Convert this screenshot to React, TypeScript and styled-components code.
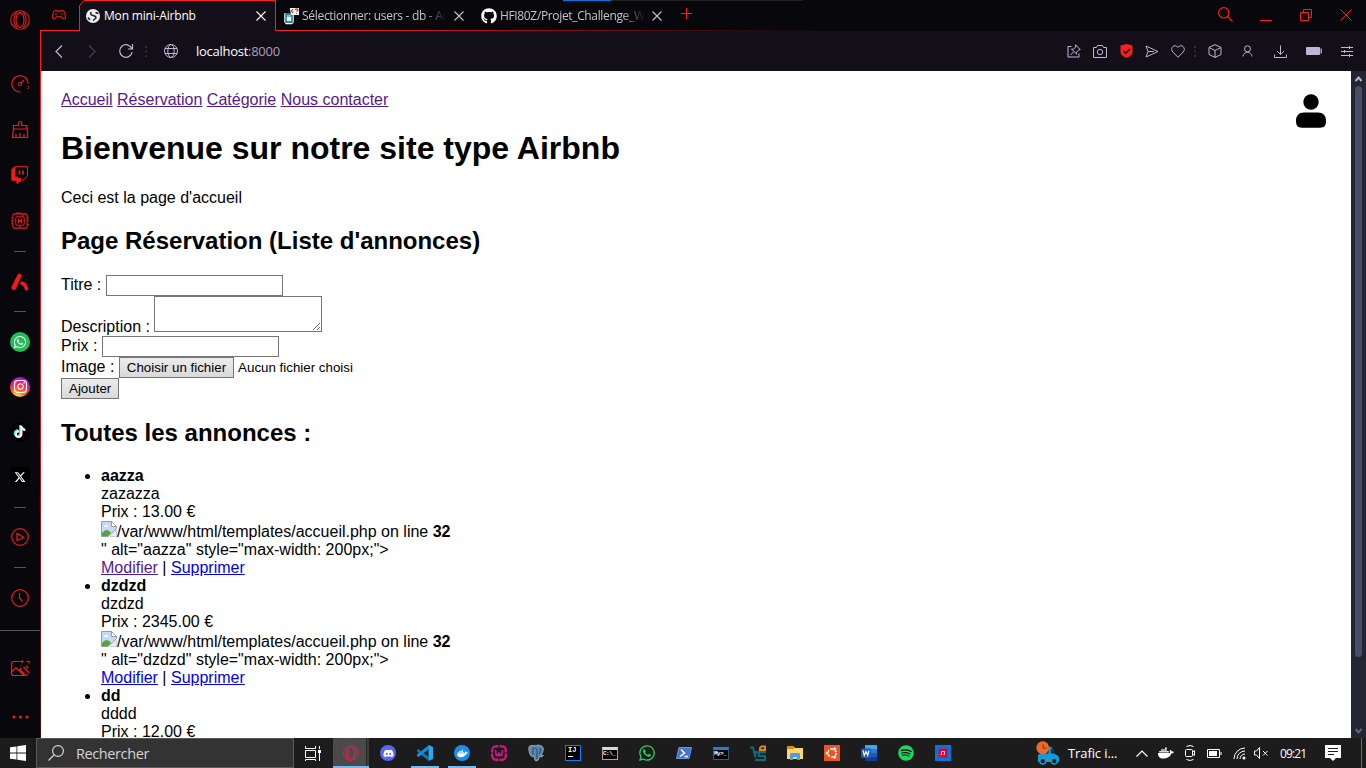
import React from 'react';
import styled, { createGlobalStyle } from 'styled-components';
import { FaWhatsapp, FaDiscord, FaDocker, FaGithub, FaInstagram, FaTiktok, FaXTwitter, FaSpotify } from 'react-icons/fa6';

const RED = '#fa1e1e';
const LILAC = '#c0b5d5';

const GlobalStyle = createGlobalStyle`
  * { box-sizing: border-box; }
  body { margin: 0; overflow: hidden; background: #fff; }
`;

const Desktop = styled.div`
  width: 1366px;
  height: 768px;
  display: flex;
  flex-direction: column;
  overflow: hidden;
  font-family: 'Open Sans', 'Noto Sans', sans-serif;
`;

const BrowserWindow = styled.div`
  height: 738px;
  display: flex;
  background: #08080c;
`;

const Glyph = styled.svg`
  display: block;
  flex: none;
  overflow: visible;
  fill: none;
  stroke: currentColor;
`;

type IconProps = { w?: number; h?: number; box?: string; sw?: number; children: React.ReactNode };
const Icon = ({ w = 18, h = w, box, sw = 1, children }: IconProps) => (
  <Glyph width={w} height={h} viewBox={box ?? `0 0 ${w} ${h}`} strokeWidth={sw}>{children}</Glyph>
);

/* ---------- sidebar ---------- */
const Sidebar = styled.aside`
  width: 40px;
  flex: none;
  display: flex;
  flex-direction: column;
  color: #eb1c1e;
`;

const SideSlot = styled.div<{ $h: number; $gap?: number }>`
  height: ${p => p.$h}px;
  margin-top: ${p => p.$gap ?? 0}px;
  flex: none;
  display: flex;
  align-items: center;
  justify-content: center;
`;

const Dash = styled.i`
  width: 12px;
  height: 1px;
  background: #d91b1e;
`;

const SideRule = styled.i`
  width: 40px;
  height: 1px;
  background: #55555c;
`;

const AppBadge = styled.span<{ $bg: string; $radius?: number; $size?: number }>`
  width: 20px;
  height: 20px;
  border-radius: ${p => p.$radius ?? 10}px;
  background: ${p => p.$bg};
  color: #fff;
  font-size: ${p => p.$size ?? 13}px;
  display: flex;
  align-items: center;
  justify-content: center;
`;

const TikTokMark = styled(FaTiktok)`
  filter: drop-shadow(-0.8px -0.4px 0 #25f4ee) drop-shadow(0.8px 0.4px 0 #fe2c55);
`;

const OperaLogo = ({ size = 20 }: { size?: number }) => (
  <Icon w={size} box="0 0 20 20" sw={1.1}>
    <circle cx="10" cy="10" r="9.3" />
    <ellipse cx="10" cy="10" rx="4" ry="7.4" />
    <path d="M7 2.5C3 5.5 3 14.5 7 17.5M13 2.5c4 3 4 12 0 15" />
  </Icon>
);

/* ---------- browser chrome ---------- */
const BrowserColumn = styled.div`
  width: 1326px;
  display: flex;
  flex-direction: column;
`;

const TabStrip = styled.header`
  height: 31px;
  display: flex;
  position: relative;
  color: #c8c8cc;
  &::after {
    content: '';
    position: absolute;
    left: 235px;
    bottom: 0;
    width: 540px;
    height: 1px;
    background: linear-gradient(90deg, ${RED}, #c91519 30%, rgba(250, 30, 30, 0));
  }
`;

const LoadStrip = styled.i`
  position: absolute;
  left: 523px;
  top: 0;
  width: 803px;
  height: 1px;
  background: linear-gradient(90deg, #0078d7 48px, #202023 48px, #202023 240px, transparent 240px);
`;

const GameCorner = styled.div`
  width: 39px;
  height: 31px;
  border-bottom: 1px solid ${RED};
  padding: 10px 0 0 12px;
  color: #d61c1f;
`;

const Tab = styled.div<{ $active?: boolean; $w: number; $pad: number }>`
  position: relative;
  width: ${p => p.$w}px;
  height: 31px;
  padding: 1px 10px 0 ${p => p.$pad}px;
  display: flex;
  align-items: center;
  color: ${p => (p.$active ? '#fff' : '#c4c4c8')};
  z-index: ${p => (p.$active ? 1 : 0)};
`;

const TabFrame = styled.svg`
  position: absolute;
  inset: 0;
`;

const TabTitle = styled.span<{ $fade?: boolean; $gap: number; $w: number; $spacing: number }>`
  position: relative;
  width: ${p => p.$w}px;
  margin: 0 auto 0 ${p => p.$gap}px;
  font-size: 12px;
  line-height: 16px;
  letter-spacing: ${p => p.$spacing}px;
  white-space: nowrap;
  overflow: hidden;
  ${p => p.$fade && 'mask-image: linear-gradient(90deg, #000 84%, transparent 100%);'}
`;

const Favicon = styled.span`
  position: relative;
  display: flex;
  font-size: 16px;
  color: #fff;
`;

const NewTab = styled.div`
  flex: none;
  padding: 8px 0 0 9px;
  color: #ff1a1a;
`;

const WindowButtons = styled.div`
  margin-left: auto;
  padding: 7px 14px 0 0;
  display: flex;
  gap: 27px;
  color: ${RED};
`;

const CloseMark = () => (
  <Icon w={10} sw={1.1}><path d="M.5.5l9 9M9.5.5l-9 9" /></Icon>
);

const Toolbar = styled.div`
  height: 40px;
  padding: 0 4px 0 14px;
  display: flex;
  align-items: center;
  background: #120f19;
  border-left: 1px solid ${RED};
  color: ${LILAC};
`;

const ToolSlot = styled.span<{ $w: number; $dim?: boolean }>`
  width: ${p => p.$w}px;
  display: flex;
  justify-content: center;
  opacity: ${p => (p.$dim ? 0.3 : 1)};
`;

const Address = styled.span`
  margin: 0 auto 0 15px;
  font-size: 13px;
  letter-spacing: -0.27px;
  color: #a89fbb;
  b { font-weight: 400; color: #fff; }
`;

const DotColumn = () => (
  <Icon w={2} h={11} sw={2}><path d="M1 0v2M1 4.5v2M1 9v2" opacity=".18" /></Icon>
);

/* ---------- web page ---------- */
const Viewport = styled.div`
  flex: 1;
  min-height: 0;
  display: flex;
  background: #fff;
  border-left: 1px solid;
  border-image: linear-gradient(${RED}, #c3171c 55%, #470c10) 1;
`;

const Page = styled.main`
  flex: 1;
  height: 667px;
  padding: 20px;
  overflow: hidden;
  position: relative;
  color: #000;
  font-family: 'Liberation Sans', Arial, sans-serif;
  font-size: 16px;
  line-height: normal;
  ul { margin: 0; padding-left: 40px; }
`;

const Link = styled.a<{ $visited?: boolean }>`
  color: ${p => (p.$visited ? '#551a8b' : '#0000ee')};
  text-decoration: underline;
`;

const Account = styled.div`
  float: right;
  margin: 3px 5px 0 0;
`;

const Field = styled.input`
  width: 177px;
  height: 21px;
  border: 1px solid #767676;
  padding: 1px 2px;
`;

const Area = styled.textarea`
  width: 168px;
  height: 36px;
  border: 1px solid #767676;
  padding: 2px;
`;

const PlainButton = styled.button`
  height: 21px;
  padding: 0 7px;
  border: 1px solid #767676;
  border-radius: 0;
  background: linear-gradient(#ececec, #d9d9d9);
  color: #000;
  font: 13.333px 'Liberation Sans', Arial, sans-serif;
`;

const FileNote = styled.span`
  font-size: 13.333px;
  margin-left: 4px;
`;

const BrokenPicture = styled.svg`
  width: 16px;
  height: 16px;
  vertical-align: baseline;
`;

const Scrollbar = styled.div`
  width: 15px;
  height: 667px;
  padding: 5px 0 4px;
  display: flex;
  flex-direction: column;
  align-items: center;
  background: #232533;
  color: #b8b8bd;
`;

const Thumb = styled.i`
  width: 7px;
  height: 571px;
  margin: 4px 0 auto;
  border-radius: 4px;
  background: #4b4d66;
`;

const LowArrow = styled.span`
  color: #66676d;
`;

/* ---------- taskbar ---------- */
const Taskbar = styled.footer`
  height: 30px;
  display: flex;
  background: #1c1c1c;
  color: #fff;
`;

const TaskSlot = styled.div<{ $w?: number; $open?: boolean; $active?: boolean }>`
  position: relative;
  width: ${p => p.$w ?? 37}px;
  height: 30px;
  padding-left: ${p => (p.$w ? 0 : 1)}px;
  flex: none;
  display: flex;
  align-items: center;
  justify-content: center;
  background: ${p => (p.$active ? 'linear-gradient(90deg,#4a4a4a 33px,#252525 33px,#252525 34px,#3d3d3d 34px)' : 'none')};
  ${p => (p.$open || p.$active) && `
    &::after {
      content: '';
      position: absolute;
      bottom: 0;
      left: ${p.$active ? 0 : 5}px;
      right: ${p.$active ? 0 : 4}px;
      height: 2px;
      background: #76b9ed;
    }
  `}
`;

const SearchBox = styled.div`
  width: 258px;
  height: 30px;
  padding-left: 11px;
  display: flex;
  align-items: center;
  gap: 12px;
  background: #333;
  border: 1px solid #5a5a5a;
  font-size: 14.5px;
  letter-spacing: -0.4px;
  color: #d4d4d4;
`;

const AppMark = styled.span<{ $c: string; $s?: number }>`
  display: flex;
  color: ${p => p.$c};
  font-size: ${p => p.$s ?? 16}px;
`;

const Disc = styled.span<{ $bg: string }>`
  width: 16px;
  height: 16px;
  border-radius: 50%;
  background: ${p => p.$bg};
  font-size: 11px;
  display: flex;
  align-items: center;
  justify-content: center;
`;

const Console = styled.span<{ $bar: string; $frame: string }>`
  width: 16px;
  height: 13px;
  border: 1px solid ${p => p.$frame};
  border-top: 3px solid ${p => p.$bar};
  background: #000;
  font: bold 6px/8px 'Liberation Mono', monospace;
  letter-spacing: -0.5px;
  white-space: nowrap;
`;

const IdeTile = styled.span`
  width: 16px;
  height: 16px;
  padding: 0 2px;
  border: 1px solid #087cfa;
  background: #000;
  font: bold 7px/9px 'Liberation Mono', monospace;
  &::after { content: ''; display: block; width: 5px; height: 1px; margin-top: 1px; background: #fff; }
`;

const Tray = styled.div`
  margin-left: auto;
  display: flex;
  align-items: center;
  font-size: 12px;
`;

const News = styled.span`
  width: 68px;
  padding-left: 8px;
  font-size: 13px;
  letter-spacing: -0.1px;
  white-space: nowrap;
`;

const Clock = styled.span`
  width: 35px;
  padding-left: 10px;
  letter-spacing: -0.85px;
  white-space: nowrap;
`;

const ShowDesktop = styled.i`
  width: 5px;
  height: 30px;
  border-left: 1px solid #696969;
`;

const annonces = [
  { title: 'aazza', text: 'zazazza', price: '13.00', visited: true },
  { title: 'dzdzd', text: 'dzdzd', price: '2345.00', visited: false },
  { title: 'dd', text: 'dddd', price: '12.00', visited: false },
];

const SideIcons = () => (
  <Sidebar>
    <SideSlot $h={40}><OperaLogo /></SideSlot>
    <SideSlot $h={44} $gap={22}>
      <Icon><path d="M9.5 17C4.5 17 .8 13.4.8 8.8S4.5.6 9 .6s8.2 3.600 8.200 8.200M17.200 11v1M16.800 13v1" strokeWidth="1.200" /><circle cx="9" cy="9" r="1.800" /><path d="M10.300 7.700L13 5" strokeWidth="1.300" /></Icon>
    </SideSlot>
    <SideSlot $h={47}>
      <Icon sw={1.2}><path d="M7.700 4.500V2c0-2 3-2 3 0v2.500h5v3.500H2.500V4.500zM2.500 8L1.500 16.500h15V8M5 16v-3M9 16v-4M13 16v-3" /></Icon>
    </SideSlot>
    <SideSlot $h={44}>
      <Icon><path d="M4 .7h12.500v9.500l-4.500 4H9l-3 2.500v-2.500H1V3.500z" /><path d="M1 3.500L4 1v10h2.500v2l3-1v2.500l-3.500 3V14H1z" fill="currentColor" /><path d="M8.500 4.500v4M12 4.500v4" strokeWidth="1.700" /></Icon>
    </SideSlot>
    <SideSlot $h={48}>
      <Icon w={18} box="0 0 19 19" sw={1.1}><rect x="2" y="2" width="15" height="15" rx="1.500" /><rect x="5" y="5" width="9" height="9" rx="2" /><path d="M8 7v5M11 7v5M8 9.500h3" strokeWidth="1.400" /><path d="M6.500 0v2M9.500 0v2M12.500 2v3M0 6.500h2M0 9.500h2M0 12.500h2M17 5.500h2M17 8.500h2M17 13.500h2M9.500 14v3" /></Icon>
    </SideSlot>
    <SideSlot $h={12}><Dash /></SideSlot>
    <SideSlot $h={49}>
      <Icon><path d="M8.500.5c1.500 0 2.600 1.500 1.800 3.200L4.800 16c-1.200 2.500-5.200.5-4.300-2.200L6.500 1.700z" fill="currentColor" stroke="none" /><path d="M9 10.200c1.500-3 5-1.500 6.500 1.300l1.700 3.500c.6 2-1.700 3.500-3 2L12.500 13.500C11 11.500 9.500 12.200 9 10.200z" fill="currentColor" stroke="none" /></Icon>
    </SideSlot>
    <SideSlot $h={10}><Dash /></SideSlot>
    <SideSlot $h={52}><AppBadge $bg="#22bd57" $size={14}><FaWhatsapp /></AppBadge></SideSlot>
    <SideSlot $h={37}><AppBadge $bg="radial-gradient(circle at 35% 100%, #ffd13b 8%, #ff6b25 30%, #f52864 55%, #a51ccd 80%, #6417dd)" $size={15}><FaInstagram /></AppBadge></SideSlot>
    <SideSlot $h={54}><AppBadge $bg="#000" $size={12}><TikTokMark /></AppBadge></SideSlot>
    <SideSlot $h={36}><AppBadge $bg="#000" $radius={4} $size={12}><FaXTwitter /></AppBadge></SideSlot>
    <SideSlot $h={24}><Dash /></SideSlot>
    <SideSlot $h={36}>
      <Icon sw={1.2}><circle cx="9" cy="9" r="8.300" /><path d="M6 5.500v7L13 9.500z" strokeLinejoin="round" /></Icon>
    </SideSlot>
    <SideSlot $h={25}><Dash /></SideSlot>
    <SideSlot $h={36}>
      <Icon sw={1.2}><circle cx="9" cy="9" r="8.300" /><path d="M8.500 4v5l3 3.500" /></Icon>
    </SideSlot>
    <SideSlot $h={29}><SideRule /></SideSlot>
    <SideSlot $h={46}>
      <Icon w={19} h={17} sw={1.2}><path d="M9 1.500H2.500Q.6 1.500.6 3.500v10q0 2 2 2h12q2 0 2-1.500M1 11.500l4-4 8 8M7.500 11l3-3M9 9.500l5 5M12.500 7l6 6M11 0v3M9.500 1.500h3M15.500 1.500h2.500v2M16 5.500v3M14.500 7h3M9.500 5.500h1" /></Icon>
    </SideSlot>
    <SideSlot $h={40} $gap={6}>
      <Icon w={17} h={4}><path d="M2 2h.01M8.500 2h.01M15 2h.01" strokeWidth="3.200" strokeLinecap="round" /></Icon>
    </SideSlot>
  </Sidebar>
);

const Chrome = () => (
  <>
    <TabStrip>
      <LoadStrip />
      <GameCorner>
        <Icon w={14} h={10} sw={1.2}><path d="M3 .6h2.500l1 1h1l1-1H11c1.500 0 2.400 4 2.400 6.500S11 9.500 9.500 7L9 6.500H5L4.500 7C3 9.500.6 9.500.6 7S1.500.6 3 .6zM3 4h2M9 4h2" /></Icon>
      </GameCorner>
      <Tab $active $w={197} $pad={7}>
        <TabFrame width="197" height="31"><path d="M.5 31V5.500L5 .5H196.500V31" fill="#120f19" stroke={RED} /></TabFrame>
        <Favicon>
          <Icon w={14} sw={1.500}><circle cx="7" cy="7" r="7" fill="#eee" stroke="none" /><path d="M5 3q-1 3 2 3.500t3 2.500l-3 2.500M9.500 3.500l3 1M2 8.500l2 2.500" stroke="#201e28" /></Icon>
        </Favicon>
        <TabTitle $gap={4} $w={140} $spacing={-0.18}>Mon mini-Airbnb</TabTitle>
        <Favicon><CloseMark /></Favicon>
      </Tab>
      <Tab $w={198} $pad={8}>
        <Favicon>
          <Icon w={15} h={16}><path d="M1.500 6.500h7v7l-1 1.500h-5l-1-1.500z" fill="#dff" stroke="#fff" strokeWidth="2.500" /><path d="M2 6h6v8H2z" fill="#dff5fa" stroke="#075f70" strokeWidth="1.300" /><path d="M2 8h6" stroke="#0e8ba0" /><path d="M7 1h7v5H8z" fill="#fff" stroke="#fff" strokeWidth="2" /><path d="M9 1L7.500 3 9 5M11 2c0-1.500 3-1.500 3 0L12.500 3.500M12.500 5v1" stroke="#e51c23" strokeWidth="1.200" /></Icon>
        </Favicon>
        <TabTitle $fade $gap={3} $w={144} $spacing={-0.3}>Sélectionner: users - db - Adminer</TabTitle>
        <CloseMark />
      </Tab>
      <Tab $w={198} $pad={7}>
        <Favicon><FaGithub /></Favicon>
        <TabTitle $fade $gap={3} $w={145} $spacing={-0.35}>HFI80Z/Projet_Challenge_Web</TabTitle>
        <CloseMark />
      </Tab>
      <NewTab><Icon w={11}><path d="M5.500 0v11M0 5.500h11" /></Icon></NewTab>
      <WindowButtons>
        <Icon w={15} sw={1.2}><circle cx="5.800" cy="5.800" r="5.200" /><path d="M9.500 9.500l5 5" /></Icon>
        <Icon w={12} h={15}><path d="M0 13.500h12" /></Icon>
        <Icon w={14} h={15}><path d="M1.500 5.500h8v8h-8zM4.500 5V2.500h8v8H10" /></Icon>
        <Icon w={12} h={16}><path d="M.5 2.500l11 11M11.500 2.500l-11 11" /></Icon>
      </WindowButtons>
    </TabStrip>
    <Toolbar>
      <ToolSlot $w={8}><Icon w={8} h={13} sw={1.200}><path d="M7 .5l-6 6 6 6" /></Icon></ToolSlot>
      <ToolSlot $w={58} $dim><Icon w={8} h={13} sw={1.200}><path d="M1 .5l6 6-6 6" /></Icon></ToolSlot>
      <ToolSlot $w={10}><Icon w={14} sw={1.200}><path d="M12.800 4.500A6.300 6.300 0 1 0 13.200 8M13.500 0v5H9" /></Icon></ToolSlot>
      <ToolSlot $w={30}><DotColumn /></ToolSlot>
      <ToolSlot $w={20}>
        <Icon w={14}><circle cx="7" cy="7" r="6.500" /><ellipse cx="7" cy="7" rx="3.200" ry="6.500" /><path d="M1 4.500h12M1 9.500h12" /></Icon>
      </ToolSlot>
      <Address><b>localhost</b>:8000</Address>
      <ToolSlot $w={26}><Icon w={14} h={14}><path d="M4.500 2.500H1v10.500h11V9.500M8.500.8l4.700 4.700-1.500.5-2.200 2.200.2 2L4.500 5l2 .2L8.700 3zM7 7.500L3.500 11" /></Icon></ToolSlot>
      <ToolSlot $w={26}><Icon w={14} h={13}><path d="M.5 2.500h3l1-2h5l1 2h3v10H.5z" /><circle cx="7" cy="7" r="2.700" /></Icon></ToolSlot>
      <ToolSlot $w={26}><Icon w={13} h={14}><path d="M6.500 0L12.500 1.500V8.500q-.5 3-6 5.500Q1 11.500.500 8.500v-7z" fill={RED} stroke="none" /><path d="M3.500 7l2.200 2.200 4.300-4.200" stroke="#120f19" strokeWidth="1.600" /></Icon></ToolSlot>
      <ToolSlot $w={26}><Icon w={14} h={13}><path d="M1 1l12 5.500L1 12l2-5.500zM3 6.500h6" /></Icon></ToolSlot>
      <ToolSlot $w={26}><Icon w={14} h={13}><path d="M7 12.300L1.800 7C-1 4 2-.5 5.500 1L7 2.500 8.500 1C12-.5 15 4 12.200 7z" /></Icon></ToolSlot>
      <ToolSlot $w={8}><DotColumn /></ToolSlot>
      <ToolSlot $w={31}><Icon w={14}><path d="M7 .6l6 2.900v7L7 13.400l-6-2.900v-7zM1 3.500l6 3 6-3M7 6.500v7" /></Icon></ToolSlot>
      <ToolSlot $w={35}><Icon w={11} h={12}><circle cx="5.500" cy="3.800" r="3" /><path d="M1 11.500C1.500 8 3.500 7.500 5.500 7.500s4 .5 4.500 4" /></Icon></ToolSlot>
      <ToolSlot $w={31}><Icon w={13} h={13}><path d="M6.500.5v9M3 6l3.500 3.500L10 6M.5 9.500v3h12v-3" /></Icon></ToolSlot>
      <ToolSlot $w={36}><Icon w={16} h={8}><rect width="14" height="8" rx="1" fill="currentColor" stroke="none" /><path d="M15.200 1.500v5" strokeWidth="1.300" /></Icon></ToolSlot>
      <ToolSlot $w={30}><Icon w={12} h={11}><path d="M0 1.500h12M0 5.500h12M0 9.500h12M8.500 0v3M3.500 4v3M8.500 8v3" /></Icon></ToolSlot>
    </Toolbar>
  </>
);

const BrokenImage = () => (
  <BrokenPicture viewBox="0 0 16 16">
    <path d="M.5.500h10l5 5v2L7 15.500H.500z" fill="#c5d8f5" stroke="#999ca3" />
    <path d="M10.500.500v5h5z" fill="#fff" stroke="#999ca3" />
    <path d="M3 6q0-2 2-2 2-1 2 2z" fill="#fff" />
    <path d="M1 12q5-6 9 0l-3 3H1z" fill="#57a539" />
    <path d="M15.500 9v6.500H9z" fill="#eef0f4" stroke="#b4b6bc" strokeWidth=".6" />
  </BrokenPicture>
);

const WebPage = () => (
  <Page>
    <Account>
      <Icon w={30} h={35}><circle cx="15" cy="8" r="7.700" fill="#000" stroke="none" /><path d="M8 18.500h14c5 0 8 3.500 8 8 0 5-1.500 7.200-6 7.200H6c-4.500 0-6-2.200-6-7.200 0-4.500 3-8 8-8z" fill="#000" stroke="none" /></Icon>
    </Account>
    <nav>
      <Link $visited>Accueil</Link> <Link $visited>Réservation</Link> <Link $visited>Catégorie</Link> <Link $visited>Nous contacter</Link>
    </nav>
    <h1>Bienvenue sur notre site type Airbnb</h1>
    <p>Ceci est la page d'accueil</p>
    <h2>Page Réservation (Liste d'annonces)</h2>
    <form>
      Titre : <Field /><br />
      Description : <Area /><br />
      Prix : <Field /><br />
      Image : <PlainButton type="button">Choisir un fichier</PlainButton><FileNote>Aucun fichier choisi</FileNote><br />
      <PlainButton type="button">Ajouter</PlainButton>
    </form>
    <h2>Toutes les annonces :</h2>
    <ul>
      {annonces.map(a => (
        <li key={a.title}>
          <strong>{a.title}</strong><br />
          {a.text}<br />
          Prix : {a.price} €<br />
          <BrokenImage />/var/www/html/templates/accueil.php on line <b>32</b><br />
          " alt="{a.title}" style="max-width: 200px;"&gt;<br />
          <Link $visited={a.visited}>Modifier</Link> | <Link>Supprimer</Link>
        </li>
      ))}
    </ul>
  </Page>
);

const Windows = () => (
  <Icon w={16}><path d="M0 2.300L6.500 1.400v6.200H0zM7.300 1.300L16 0v7.600H7.300zM0 8.400h6.500v6.200L0 13.700zM7.300 8.400H16V16l-8.700-1.300z" fill="#fff" stroke="none" /></Icon>
);

const TaskApps = () => (
  <>
    <TaskSlot $active $w={36}><AppMark $c="#e0234e"><OperaLogo size={16} /></AppMark></TaskSlot>
    <TaskSlot><Disc $bg="#5865f2"><FaDiscord /></Disc></TaskSlot>
    <TaskSlot $open>
      <Icon w={16}><path d="M11.500 0L16 2v12l-4.500 2z" fill="#2aa9f2" stroke="none" /><path d="M0 5l1.500-1L12 12v4L0 6.500z" fill="#0877b9" stroke="none" /><path d="M0 11l1.500 1L12 4V0L0 9.500z" fill="#168fd4" stroke="none" /></Icon>
    </TaskSlot>
    <TaskSlot $open><Disc $bg="#1b8ff0"><FaDocker /></Disc></TaskSlot>
    <TaskSlot>
      <Icon w={16}><rect x="1.200" y="1.200" width="13.600" height="13.600" rx="4" stroke="#c9187a" strokeWidth="2.400" /><path d="M8 0v3M8 13v3M0 8h3M13 8h3" stroke="#1c1c1c" /><path d="M4.500 5l.8 5.500h2L8 7.500l.7 3h2L11.500 5" stroke="#d91c85" strokeWidth="1.600" /></Icon>
    </TaskSlot>
    <TaskSlot>
      <Icon w={16}>
        <path d="M1 1.500Q4-.5 7 .8 10-.8 13.500.8 17 3 14 8.500l-1 1.500 2.500.5q-1.500 2-4.500 1.500Q11 16 8.500 16T6.500 11.500Q3 13 1.500 8 0 4 1 1.500z" fill="#5c88ab" stroke="#a9bac8" strokeWidth=".7" />
        <path d="M5.500 2.500Q4.500 5 5 9.500M7 3Q10 3.500 9 8.500L9 14M12 3q1.500 2-.5 6" stroke="#1f3950" strokeWidth=".9" />
      </Icon>
    </TaskSlot>
    <TaskSlot><IdeTile>IJ</IdeTile></TaskSlot>
    <TaskSlot><Console $bar="#d9d9d9" $frame="#a6a6a6">C:\_</Console></TaskSlot>
    <TaskSlot><AppMark $c="#25d366" $s={18}><FaWhatsapp /></AppMark></TaskSlot>
    <TaskSlot>
      <Icon w={16} h={12}><path d="M3 .5h12.500l-2.500 11H.5z" fill="#4474d3" stroke="#6994df" /><path d="M5 2.500l3.500 3.500-4.500 3.500M8.500 9.500h3.500" stroke="#fff" strokeWidth="1.500" /></Icon>
    </TaskSlot>
    <TaskSlot><Console $bar="#1683d8" $frame="#34587d">My&gt;_</Console></TaskSlot>
    <TaskSlot>
      <Icon w={16} sw={2}><path d="M0 2.500h3l2.500 10V7H16M15 8v0M16 7.500H9V11h6v4H5" stroke="#0d6b78" /><path d="M10 5V3l1.500-1.500H15V5z" stroke="#d88520" /></Icon>
    </TaskSlot>
    <TaskSlot>
      <Icon w={16} h={14}><path d="M0 0h6l2 2h8v11H0z" fill="#ffd66b" stroke="none" /><path d="M0 0h6l1.500 1.500L6.500 3H0z" fill="#d99208" stroke="none" /><path d="M3 14V8q0-1 1-1h8q1 0 1 1v6h-3v-3H6v3z" fill="#46a1e6" stroke="none" /></Icon>
    </TaskSlot>
    <TaskSlot>
      <Icon w={16}><path d="M0 0h16v16H0z" fill="#e95420" stroke="none" /><circle cx="8" cy="8" r="4.200" stroke="#fff" strokeWidth="1.800" strokeDasharray="7.200 1.600" /><circle cx="3" cy="8" r="1.600" fill="#fff" stroke="#e95420" strokeWidth=".6" /><circle cx="10.700" cy="3.700" r="1.600" fill="#fff" stroke="#e95420" strokeWidth=".6" /><circle cx="10.700" cy="12.300" r="1.600" fill="#fff" stroke="#e95420" strokeWidth=".6" /></Icon>
    </TaskSlot>
    <TaskSlot>
      <Icon w={16}><path d="M4 0h12v4H4z" fill="#41a5ee" stroke="none" /><path d="M4 4h12v4H4z" fill="#2b7cd3" stroke="none" /><path d="M4 8h12v4H4z" fill="#185abd" stroke="none" /><path d="M4 12h12v4H4z" fill="#103f91" stroke="none" /><rect y="3.500" width="10" height="9.500" rx="1" fill="#185abd" stroke="none" /><path d="M2 5.500l1.300 5L5 6.500l1.700 4L8 5.500" stroke="#fff" strokeWidth="1.200" /></Icon>
    </TaskSlot>
    <TaskSlot><AppMark $c="#1ed760"><FaSpotify /></AppMark></TaskSlot>
    <TaskSlot>
      <Icon w={16}><path d="M0 0h16v16H0z" fill="#0078d7" stroke="none" /><path d="M3.500 3.500h9v9h-9z" fill="#e5003a" stroke="none" /><path d="M6.500 9.500v-3h3v3M5.500 9.500h1M8.500 9.500h1" stroke="#fff" strokeWidth=".9" /></Icon>
    </TaskSlot>
  </>
);

const App = () => (
  <Desktop>
    <GlobalStyle />
    <BrowserWindow>
      <SideIcons />
      <BrowserColumn>
        <Chrome />
        <Viewport>
          <WebPage />
          <Scrollbar>
            <Icon w={7} h={6} sw={2}><path d="M.5 5l3-3.500 3 3.500" /></Icon>
            <Thumb />
            <LowArrow><Icon w={7} h={6} sw={2}><path d="M.5 1l3 3.500L6.500 1" /></Icon></LowArrow>
          </Scrollbar>
        </Viewport>
      </BrowserColumn>
    </BrowserWindow>
    <Taskbar>
      <TaskSlot $w={36}><Windows /></TaskSlot>
      <SearchBox>
        <Icon w={16} sw={1.2}><circle cx="10" cy="6" r="5.400" /><path d="M6 10L.500 15.500" /></Icon>
        Rechercher
      </SearchBox>
      <TaskSlot $w={39}>
        <Icon w={17} h={15}><path d="M.500 0v2.500h10V0M.500 4.500h10v7H.500zM.500 15v-1.500h10V15M14.500 0v3M14.500 7v8" /><path d="M13 4h3v3h-3z" fill="#fff" stroke="none" /></Icon>
      </TaskSlot>
      <TaskApps />
      <Tray>
        <Icon w={24} h={24} box="0 0 25 25"><path d="M2 22v-6q0-3 4-3h7V6h3l4 8q4 1 4 4v4z" fill="#159bd8" stroke="none" /><path d="M15.500 7v6h4z" fill="#1c1c1c" stroke="none" /><circle cx="7" cy="21" r="3" fill="#1c1c1c" stroke="#159bd8" strokeWidth="1.500" /><circle cx="19" cy="21" r="3" fill="#1c1c1c" stroke="#159bd8" strokeWidth="1.500" /><circle cx="7" cy="7" r="6.700" fill="#ee6a2c" stroke="none" /><path d="M7.500 3.500v4h3.500" stroke="#643228" /></Icon>
        <News>Trafic i...</News>
        <TaskSlot $w={27}><Icon w={12} h={7} sw={1.200}><path d="M.5 6.500L6 1l5.500 5.500" /></Icon></TaskSlot>
        <TaskSlot $w={22}><AppMark $c="#fff" $s={16}><FaDocker /></AppMark></TaskSlot>
        <TaskSlot $w={26}><Icon w={12} h={16}><rect x="1.500" y="4.500" width="7" height="7" rx="1" /><path d="M8.500 7l2-1.500v5l-2-1.500M2.500 1.500q3.500-2 7 0M2.500 14.500q3.500 2 7 0" /></Icon></TaskSlot>
        <TaskSlot $w={23}><Icon w={15} h={9}><path d="M.500.500h12v8H.500zM14 3v3" /><path d="M2 2h8v5H2z" fill="#fff" stroke="none" /></Icon></TaskSlot>
        <TaskSlot $w={26}><Icon w={13} h={13}><path d="M1 12A11 11 0 0 1 12 1M4 12A8 8 0 0 1 12 4M7 12A5 5 0 0 1 12 7" /><circle cx="11" cy="11" r="1.500" fill="#fff" stroke="none" /></Icon></TaskSlot>
        <TaskSlot $w={18}><Icon w={14} h={12}><path d="M.500 4h2l3-3.500v11L2.500 8h-2zM9 4l4.500 4.500M13.500 4L9 8.500" /></Icon></TaskSlot>
        <Clock>09:21</Clock>
        <TaskSlot $w={56}><Icon w={16} h={16}><path d="M0 0h16v13h-5l-3 3-3-3H0z" fill="#fff" stroke="none" /><path d="M3 3.500h10M3 6.500h10M3 9.500h6" stroke="#1c1c1c" /></Icon></TaskSlot>
        <ShowDesktop />
      </Tray>
    </Taskbar>
  </Desktop>
);

export default App;
